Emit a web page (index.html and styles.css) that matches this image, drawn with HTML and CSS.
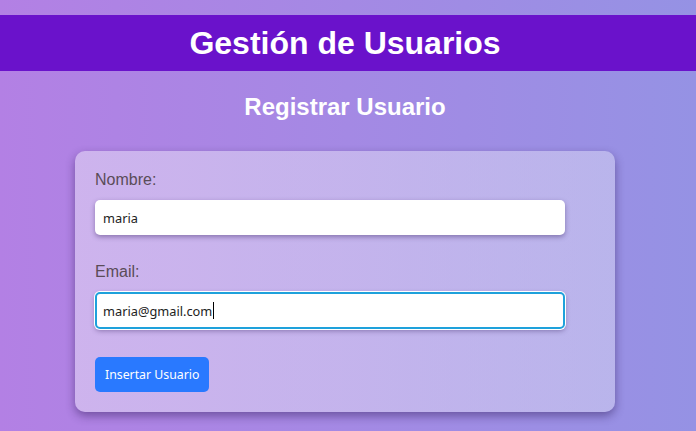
FILE: index.html
```html
<!DOCTYPE html>
<html lang="es">
<head>
<meta charset="utf-8">
<title>Gestión de Usuarios</title>
<link rel="stylesheet" href="styles.css">
</head>
<body>
<header class="topbar">
  <h1 class="title">Gestión de Usuarios</h1>
</header>
<h2 class="subtitle">Registrar Usuario</h2>
<form class="card">
  <label class="label" for="nombre">Nombre:</label>
  <input class="field" id="nombre" type="text" value="maria">
  <label class="label" for="email">Email:</label>
  <div class="field field-focus">maria@gmail.com<span class="caret"></span></div>
  <button class="btn" type="button">Insertar Usuario</button>
</form>
</body>
</html>
```
FILE: styles.css
```css
html, body {
  margin: 0;
  height: 100%;
}
body {
  font-family: "Liberation Sans", Arial, sans-serif;
  background: linear-gradient(to right, #b380e4, #9592e4);
  padding: 15px 6px 0 0;
  box-sizing: border-box;
  overflow: hidden;
}
.topbar {
  background: #6a12cb;
  height: 56px;
  margin-right: -6px;
  padding-right: 6px;
  display: flex;
  align-items: center;
  justify-content: center;
}
.title {
  margin: 0;
  color: #fff;
  font-size: 32px;
  font-weight: bold;
}
.subtitle {
  margin: 22px 0 0;
  text-align: center;
  color: #fff;
  font-size: 24px;
  font-weight: bold;
  line-height: 28px;
}
.card {
  width: 500px;
  margin: 30px auto 0;
  padding: 20px;
  border-radius: 10px;
  background: linear-gradient(to right, rgba(230, 220, 245, 0.55), rgba(225, 225, 245, 0.45));
  box-shadow: 0 4px 10px rgba(40, 20, 80, 0.45);
  display: flex;
  flex-direction: column;
  align-items: flex-start;
}
.label {
  color: #5a4c58;
  font-size: 16px;
  line-height: 18px;
  margin: 0 0 11px;
}
.field {
  box-sizing: border-box;
  width: 470px;
  height: 35px;
  margin: 0 0 28px;
  padding: 0 8px;
  border: none;
  border-radius: 5px;
  background: #fff;
  box-shadow: 0 2px 5px rgba(60, 40, 100, 0.45);
  font-family: "Noto Sans", "DejaVu Sans", sans-serif;
  font-size: 12.8px;
  color: #222;
  display: flex;
  align-items: center;
  outline: none;
}
.field-focus {
  height: 37px;
  margin-bottom: 28px;
  border: 2px solid #1ea1db;
  box-shadow: 0 0 0 1px #ffffff, 0 2px 5px rgba(60, 40, 100, 0.45);
  padding-left: 6px;
}
.caret {
  display: inline-block;
  width: 1px;
  height: 17px;
  background: #000;
  margin-left: 1px;
}
.btn {
  height: 35px;
  padding: 0 10px;
  border: none;
  border-radius: 5px;
  background: #2979ff;
  color: #fff;
  font-family: "Noto Sans", "DejaVu Sans", sans-serif;
  font-size: 12.3px;
}
```
